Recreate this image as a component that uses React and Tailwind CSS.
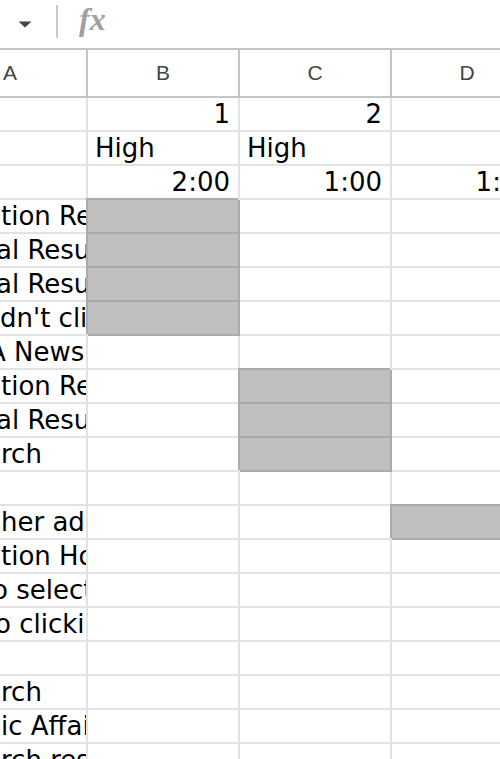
import React from "react";

const dataFont = { fontFamily: '"DejaVu Sans", Verdana, sans-serif' };

const rows = [
  { a: "", aml: "ml-0", b: "1", bAlign: "r", c: "2", cAlign: "r" },
  { a: "", aml: "ml-0", b: "High", bAlign: "l", c: "High", cAlign: "l" },
  { a: "", aml: "ml-0", b: "2:00", bAlign: "r", c: "1:00", cAlign: "r", d: "1:00" },
  { a: "tion Results", aml: "ml-[1px]", bGray: true },
  { a: "al Results", aml: "ml-[-4px]", bGray: true },
  { a: "al Results", aml: "ml-[-4px]", bGray: true },
  { a: "dn't click", aml: "ml-0", bGray: true },
  { a: "A News", aml: "ml-[-12px]" },
  { a: "tion Results", aml: "ml-[1px]", cGray: true },
  { a: "al Results", aml: "ml-[-4px]", cGray: true },
  { a: "rch", aml: "ml-[1px]", cGray: true },
  { a: "", aml: "ml-0" },
  { a: "her ad", aml: "ml-[1px]", dGray: true },
  { a: "tion Hotels", aml: "ml-[1px]" },
  { a: "o selection", aml: "ml-[-8px]" },
  { a: "o clicking", aml: "ml-[-5px]" },
  { a: "", aml: "ml-0" },
  { a: "rch", aml: "ml-[1px]" },
  { a: "ic Affairs", aml: "ml-[1px]" },
  { a: "rch results", aml: "ml-[1px]" },
];

function Cell({ w, gray, children, align }) {
  const base =
    "shrink-0 h-[34px] border-r-2 border-b-2 flex items-end pb-[1px] overflow-hidden whitespace-nowrap text-[26px] leading-[30px] text-black";
  const color = gray
    ? "bg-[#c0c0c0] border-[#ababab] shadow-[-2px_-2px_0_0_#ababab]"
    : "bg-white border-[#e2e2e2]";
  const al = align === "r" ? "justify-end pr-[8px]" : "justify-start pl-[7px]";
  return <div className={`${w} ${base} ${color} ${al}`}>{children}</div>;
}

export default function App() {
  return (
    <div className="w-[500px] h-[759px] overflow-hidden bg-white" style={dataFont}>
      {/* formula bar */}
      <div className="h-[48px] flex items-center">
        <div className="w-[56px] flex justify-center pl-[1px] pr-[8px]">
          <svg width="14" height="7" viewBox="0 0 14 7" className="mt-[1px]">
            <path d="M0.5 0.5 L13.5 0.5 L7 6.5 Z" fill="#444444" />
          </svg>
        </div>
        <div className="w-[2px] h-[33px] bg-[#c8c8c8] mt-[-6px]" />
        <div
          className="ml-[21px] text-[32px] italic font-bold text-[#a0a0a0] leading-none mt-[-10px]"
          style={{ fontFamily: '"Liberation Serif", "Times New Roman", serif' }}
        >
          fx
        </div>
      </div>
      {/* column headers */}
      <div
        className="flex border-t-2 border-b-2 border-[#c4c4c4] h-[50px]"
        style={{ fontFamily: '"Liberation Sans", Arial, sans-serif' }}
      >
        <div className="w-[88px] shrink-0 border-r-2 border-[#c4c4c4] flex items-center overflow-hidden text-[21px] text-[#444]">
          <span className="ml-[3px]">A</span>
        </div>
        <div className="w-[152px] shrink-0 border-r-2 border-[#c4c4c4] flex items-center justify-center text-[21px] text-[#444]">
          B
        </div>
        <div className="w-[152px] shrink-0 border-r-2 border-[#c4c4c4] flex items-center justify-center text-[21px] text-[#444]">
          C
        </div>
        <div className="w-[152px] shrink-0 border-r-2 border-[#c4c4c4] flex items-center justify-center text-[21px] text-[#444]">
          D
        </div>
      </div>
      {/* data rows */}
      {rows.map((r, i) => (
        <div key={i} className="flex">
          <div className="w-[88px] shrink-0 h-[34px] border-r-2 border-b-2 border-[#e2e2e2] flex items-end pb-[1px] overflow-hidden whitespace-nowrap text-[26px] leading-[30px] text-black">
            <span className={`shrink-0 ${r.aml}`}>{r.a}</span>
          </div>
          <Cell w="w-[152px]" gray={r.bGray} align={r.bAlign}>
            {r.b}
          </Cell>
          <Cell w="w-[152px]" gray={r.cGray} align={r.cAlign}>
            {r.c}
          </Cell>
          <Cell w="w-[152px]" gray={r.dGray} align="r">
            {r.d}
          </Cell>
        </div>
      ))}
    </div>
  );
}
